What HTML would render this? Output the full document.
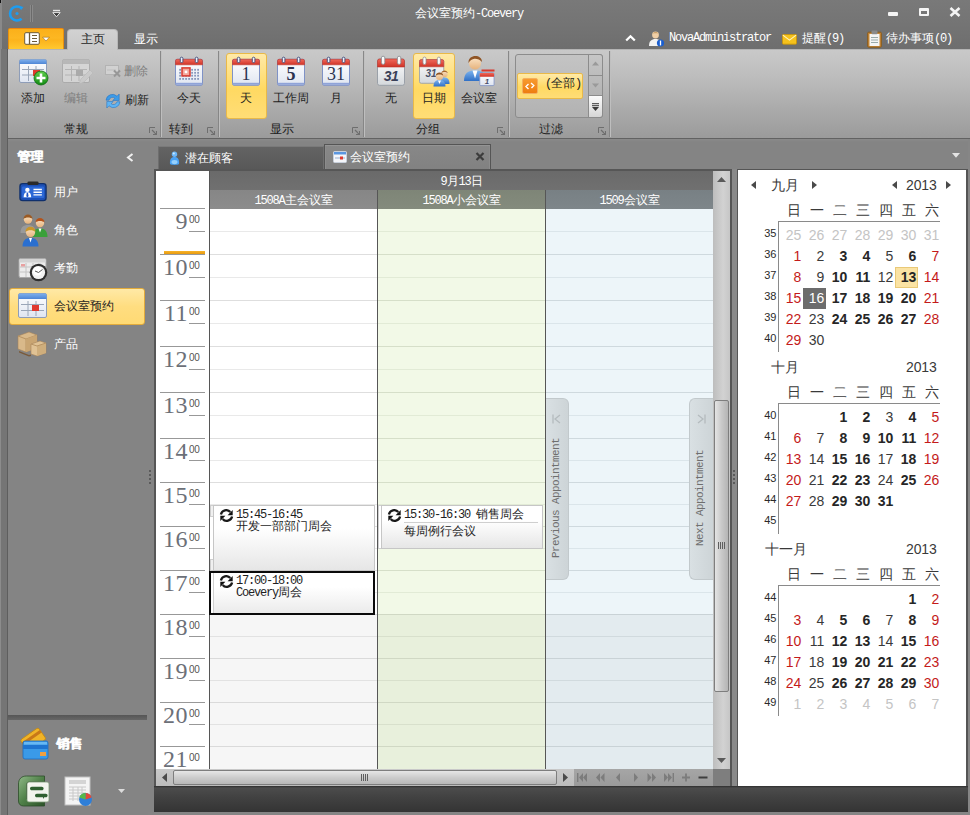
<!DOCTYPE html>
<html lang="zh">
<head>
<meta charset="utf-8">
<title>会议室预约-Coevery</title>
<style>
*{box-sizing:border-box;margin:0;padding:0}
html,body{width:970px;height:815px;overflow:hidden}
body{position:relative;background:#848484;font-family:"Liberation Sans",sans-serif;font-size:12px;color:#1e1e1e}
.a{position:absolute}
.t{position:absolute;white-space:nowrap;line-height:14px;height:14px;font-size:12px}
.m{font-family:"Liberation Mono",monospace;font-size:12px;letter-spacing:-1.2px}
.w{color:#fff}
.c{text-align:center}
/* title */
#title{left:0;top:0;width:970px;height:49px;background:linear-gradient(#797979,#747474 50%,#6e6e6e)}
#edgeL{left:0;top:49px;width:8px;height:766px;background:linear-gradient(90deg,#8c8c8c 0 1px,#757575 1px 7px,#5e5e5e 7px 8px)}
/* ribbon */
#ribbon{left:8px;top:49px;width:962px;height:89px;background:linear-gradient(#c9c9c9,#bdbdbd 30%,#a9a9a9 70%,#9b9b9b);border-top:1px solid #b4b4b4}
#ribline{left:8px;top:138px;width:962px;height:1px;background:#626262}
#ribshadow{left:8px;top:139px;width:962px;height:3px;background:linear-gradient(#8a8a8a,#848484)}
.sep{position:absolute;top:51px;width:2px;height:86px;border-left:1px solid #858585;border-right:1px solid #c0c0c0;opacity:.95}
.lbl{top:122px}
.hot{position:absolute;background:linear-gradient(#ffeaa8,#ffd962 55%,#ffdd76);border:1px solid #e9b948;border-radius:3px}
.launch{position:absolute;width:8px;height:8px;top:127px}
</style>
</head>
<body>
<div id="title" class="a"></div>
<div id="edgeL" class="a"></div>
<div id="ribbon" class="a"></div>
<div id="ribline" class="a"></div>
<div id="ribshadow" class="a"></div>
<!-- logo -->
<svg class="a" style="left:8px;top:4px" width="17" height="19" viewBox="0 0 17 19"><path d="M13.6 4.2 A7 7 0 1 0 13.6 14.8" fill="none" stroke="#1d9cf0" stroke-width="2.6"/><circle cx="9" cy="9.5" r="1.6" fill="#1d9cf0"/><path d="M11.5 2.2 L15.5 3 L13 6.2z" fill="#1d9cf0"/></svg>
<div class="a" style="left:30px;top:5px;width:3px;height:17px;background:linear-gradient(90deg,#8a8a8a 0 1px,#6a6a6a 1px 2px,#8a8a8a 2px 3px)"></div>
<div class="a" style="left:0;top:0;width:2px;height:49px;background:#898989"></div><div class="a" style="left:0;top:0;width:1px;height:3px;background:#111"></div>
<svg class="a" style="left:52px;top:9px" width="9" height="9" viewBox="0 0 9 9"><path d="M1 1.5h7" stroke="#e6e6e6" stroke-width="1.4"/><path d="M0.8 3.6h7.4L4.5 7.8z" fill="#3a3a3a" stroke="#e6e6e6" stroke-width="1"/></svg>
<div class="t w" style="left:415px;top:6px"><span>会议室预约</span><span class="m">-Coevery</span></div>
<!-- window buttons -->
<div class="a" style="left:888px;top:12px;width:10px;height:4px;background:#f4f4f4;border-radius:1px"></div>
<div class="a" style="left:919px;top:8px;width:10px;height:8px;border:2px solid #f4f4f4;border-top-width:3px;border-radius:1px"></div>
<svg class="a" style="left:949px;top:7px" width="12" height="10" viewBox="0 0 12 10"><path d="M1.5 1l9 8M10.5 1l-9 8" stroke="#f4f4f4" stroke-width="2.6"/></svg>
<!-- app button -->
<div class="a" style="left:8px;top:28px;width:56px;height:21px;border-radius:2px 2px 0 0;background:linear-gradient(#fbb01a,#fdb722 45%,#fcb31c 55%,#ffc830);border:1px solid #e8900e;border-top-color:#f0860c;border-bottom:none"></div>
<svg class="a" style="left:24px;top:32px" width="26" height="13" viewBox="0 0 26 13"><rect x="0.7" y="0.7" width="14.6" height="11.6" rx="1.2" fill="#fff" stroke="#6b5a3a" stroke-width="1"/><path d="M5.5 1v11" stroke="#6b5a3a" stroke-width="1.3"/><path d="M8 3.5h5M8 6.5h5M8 9.5h5" stroke="#6b5a3a" stroke-width="1.2"/><path d="M18.6 5.2h6.8L22 9z" fill="#fff" stroke="#8a5a10" stroke-width=".5"/></svg>
<!-- tabs -->
<div class="a" style="left:67px;top:29px;width:51px;height:21px;border-radius:4px 4px 0 0;background:linear-gradient(#d2d2d2,#c8c8c8);border:1px solid #b8b8b8;border-bottom:none"></div>
<div class="t c" style="left:67px;top:32px;width:51px;font-size:12px">主页</div>
<div class="t w c" style="left:120px;top:32px;width:51px;font-size:12px">显示</div>
<!-- right status items -->
<svg class="a" style="left:625px;top:34px" width="11" height="8" viewBox="0 0 11 8"><path d="M1.2 6.6L5.5 2.2L9.8 6.6" fill="none" stroke="#fff" stroke-width="2.2"/></svg>
<svg class="a" style="left:648px;top:30px" width="18" height="18" viewBox="0 0 18 18"><circle cx="7.5" cy="5" r="3.4" fill="#f0cfa6"/><path d="M4.6 3.6c1-2.2 5-2.2 5.8 0c-1.6-.6-4-.6-5.8 0z" fill="#c9a06a"/><path d="M1 16c0-5 2.5-7 6.5-7s6.5 2 6.500 7z" fill="#f2f2f2"/><circle cx="12.500" cy="13" r="3.600" fill="#1a5fd0"/><path d="M12.5 10.600v4.800" stroke="#fff" stroke-width="1.3"/></svg>
<div class="t w m" style="left:669px;top:31px">NovaAdministrator</div>
<svg class="a" style="left:782px;top:34px" width="15" height="10.600" viewBox="0 0 17 13" preserveAspectRatio="none"><rect x=".5" y=".5" width="16" height="12" rx="1" fill="#f6c21c" stroke="#c9930a"/><path d="M1 1.500l7.500 6l7.500-6" fill="none" stroke="#fff3c0" stroke-width="1.2"/></svg>
<div class="t w" style="left:802px;top:31px;font-size:12px">提醒<span class="m">(9)</span></div>
<svg class="a" style="left:867px;top:30px" width="15" height="18" viewBox="0 0 15 18"><rect x=".7" y="2.200" width="13.600" height="15" rx="1" fill="#c98a3a" stroke="#8a5a1a"/><rect x="2.500" y="4" width="10" height="12" fill="#f4f4f4"/><rect x="4.500" y=".6" width="6" height="3.600" rx="1" fill="#8a8a8a"/><path d="M4 7.500h7M4 10h7M4 12.500h7" stroke="#9aa" stroke-width="1"/></svg>
<div class="t w" style="left:886px;top:31px;font-size:12px">待办事项<span class="m">(0)</span></div>

<!-- RIBBON -->
<svg width="0" height="0" style="position:absolute">
<defs>
<linearGradient id="gRed" x1="0" y1="0" x2="0" y2="1"><stop offset="0" stop-color="#f0685a"/><stop offset="1" stop-color="#cf3327"/></linearGradient>
<linearGradient id="gPaper" x1="0" y1="0" x2="0" y2="1"><stop offset="0" stop-color="#ffffff"/><stop offset="1" stop-color="#dfe5f1"/></linearGradient>
<linearGradient id="gPaperG" x1="0" y1="0" x2="0" y2="1"><stop offset="0" stop-color="#ffffff"/><stop offset="1" stop-color="#d4d8dc"/></linearGradient>
<linearGradient id="gBlueTop" x1="0" y1="0" x2="0" y2="1"><stop offset="0" stop-color="#7fb0ec"/><stop offset="1" stop-color="#4e86d6"/></linearGradient>
<linearGradient id="gGreen" x1="0" y1="0" x2="0" y2="1"><stop offset="0" stop-color="#5fd04a"/><stop offset="1" stop-color="#128a14"/></linearGradient>
<linearGradient id="gSkin" x1="0" y1="0" x2="0" y2="1"><stop offset="0" stop-color="#fbe3c4"/><stop offset="1" stop-color="#e5b27c"/></linearGradient>
<linearGradient id="gShirt" x1="0" y1="0" x2="0" y2="1"><stop offset="0" stop-color="#7db4ee"/><stop offset="1" stop-color="#2f6fc6"/></linearGradient>
<g id="calbase">
  <rect x="0.5" y="3.300" width="27" height="26" rx="1.500" fill="url(#gPaper)" stroke="#7f92c6"/>
  <path d="M0.5 8.800V4.800a1.500 1.500 0 0 1 1.500-1.500h24a1.500 1.500 0 0 1 1.500 1.500v4z" fill="url(#gRed)" stroke="#c0392e" stroke-width=".6"/>
  <rect x="1" y="26.800" width="26" height="2" fill="#8fa3d8"/>
  <rect x="5.300" y="1.200" width="2.600" height="5.400" rx="1.200" fill="#eef1f8" stroke="#3c4a78" stroke-width=".9"/>
  <rect x="20.300" y="1.200" width="2.600" height="5.400" rx="1.200" fill="#eef1f8" stroke="#3c4a78" stroke-width=".9"/>
</g>
<g id="calgray">
  <rect x="0.5" y="4" width="27" height="26.300" rx="2" fill="url(#gPaperG)" stroke="#9aa0a8"/>
  <path d="M0.5 12V6a2 2 0 0 1 2-2h23a2 2 0 0 1 2 2v6z" fill="url(#gRed)" stroke="#b8342a" stroke-width=".6"/>
  <rect x="4.400" y="1.200" width="3.400" height="8.200" rx="1.700" fill="#fafafa" stroke="#85888e" stroke-width=".8"/>
  <rect x="20.400" y="1.200" width="3.400" height="8.200" rx="1.700" fill="#fafafa" stroke="#85888e" stroke-width=".8"/>
</g>
<g id="launch"><path d="M0.5 6V0.5h5.500" fill="none" stroke="#6e6e6e" stroke-width="1"/><path d="M3 3l4 4M7.500 4v3.500h-3.500" fill="none" stroke="#6e6e6e" stroke-width="1.200"/></g>
<g id="recur"><path d="M1.900 5.400A5.400 5.400 0 0 1 11.300 3.100" fill="none" stroke="#1a1a1a" stroke-width="2.300"/><path d="M13.700 1v5.200H8.600z" fill="#111"/><path d="M13.100 7.600A5.400 5.400 0 0 1 3.700 9.900" fill="none" stroke="#1a1a1a" stroke-width="2.300"/><path d="M1.300 12V6.800H6.400z" fill="#111"/></g>
</defs>
</svg>
<!-- separators -->
<div class="sep" style="left:160px"></div>
<div class="sep" style="left:218px"></div>
<div class="sep" style="left:363px"></div>
<div class="sep" style="left:508px"></div>
<div class="sep" style="left:609px"></div>
<!-- group 1 -->
<svg class="a" style="left:19px;top:58px" width="30" height="28" viewBox="0 0 30 28">
 <rect x=".5" y="1.500" width="27" height="23" rx="1.500" fill="url(#gPaper)" stroke="#8e9db8"/>
 <path d="M.5 6V3a1.500 1.500 0 0 1 1.500-1.500h24a1.500 1.500 0 0 1 1.500 1.500v3z" fill="url(#gBlueTop)"/>
 <path d="M3 11.500h22M3 17h22M9.500 8v15M17 8v15" stroke="#9aa6b8" stroke-width="1"/>
 <rect x="14" y="12" width="7" height="6" fill="#e03a30"/>
 <circle cx="22" cy="20" r="7" fill="url(#gGreen)" stroke="#0c6a10" stroke-width=".8"/>
 <path d="M22 15.500v9M17.500 20h9" stroke="#fff" stroke-width="2.600"/>
</svg>
<div class="t c" style="left:13px;top:91px;width:40px">添加</div>
<svg class="a" style="left:62px;top:58px;opacity:.75" width="31" height="28" viewBox="0 0 31 28">
 <rect x=".5" y="1.500" width="27" height="23" rx="1.500" fill="#dcdcdc" stroke="#a6a6a6"/>
 <path d="M.5 6V3a1.500 1.500 0 0 1 1.500-1.500h24a1.500 1.500 0 0 1 1.500 1.500v3z" fill="#b4b4b4"/>
 <path d="M3 11.500h22M3 17h22M9.500 8v15M17 8v15" stroke="#b0b0b0" stroke-width="1"/>
 <rect x="14" y="12" width="7" height="6" fill="#a4a4a4"/>
 <path d="M17 26l2-5l9-9l3 3l-9 9z" fill="#cfcfcf" stroke="#b5b5b5" stroke-width=".6"/>
</svg>
<div class="t c" style="left:56px;top:91px;width:40px;color:#7e7e7e">编辑</div>
<svg class="a" style="left:105px;top:65px;opacity:.8" width="17" height="13" viewBox="0 0 17 13">
 <rect x=".5" y=".5" width="13" height="9" fill="#d6d6d6" stroke="#b0b0b0"/><path d="M2 5h9" stroke="#bcbcbc"/>
 <path d="M9 5.500l6 6M15 5.500l-6 6" stroke="#8e8e8e" stroke-width="2"/>
</svg>
<div class="t" style="left:124px;top:64px;color:#7e7e7e">删除</div>
<svg class="a" style="left:104px;top:92px" width="18" height="18" viewBox="0 0 18 18">
 <path d="M2 8.200A6.500 6.500 0 0 1 13 4.200L15.200 2V8.500H8.700L10.900 6.300A3.600 3.600 0 0 0 5 8.200z" fill="#3c9be8" stroke="#1c6cc0" stroke-width=".5"/>
 <path d="M16 9.800A6.500 6.500 0 0 1 5 13.800L2.800 16V9.500H9.300L7.100 11.700A3.600 3.600 0 0 0 13 9.800z" fill="#5fb4f4" stroke="#1c6cc0" stroke-width=".5"/>
</svg>
<div class="t" style="left:125px;top:93px">刷新</div>
<div class="t c lbl" style="left:56px;width:40px">常规</div>
<svg class="launch" style="left:149px"><use href="#launch"/></svg>
<!-- group 2 -->
<svg class="a" style="left:175px;top:56px" width="28" height="30" viewBox="0 0 28 30"><use href="#calbase"/>
 <g fill="#8798bc"><rect x="4.2" y="12.9" width="1.800" height="1.800"/><rect x="7.2" y="12.9" width="1.800" height="1.800"/><rect x="10.2" y="12.9" width="1.800" height="1.800"/><rect x="13.2" y="12.9" width="1.800" height="1.800"/><rect x="16.2" y="12.9" width="1.800" height="1.800"/><rect x="19.2" y="12.9" width="1.800" height="1.800"/><rect x="22.2" y="12.9" width="1.800" height="1.800"/><rect x="4.2" y="15.9" width="1.800" height="1.800"/><rect x="7.2" y="15.9" width="1.800" height="1.800"/><rect x="10.2" y="15.9" width="1.800" height="1.800"/><rect x="13.2" y="15.9" width="1.800" height="1.800"/><rect x="16.2" y="15.9" width="1.800" height="1.800"/><rect x="19.2" y="15.9" width="1.800" height="1.800"/><rect x="22.2" y="15.9" width="1.800" height="1.800"/><rect x="4.2" y="18.8" width="1.800" height="1.800"/><rect x="7.2" y="18.8" width="1.800" height="1.800"/><rect x="10.2" y="18.8" width="1.800" height="1.800"/><rect x="13.2" y="18.8" width="1.800" height="1.800"/><rect x="16.2" y="18.8" width="1.800" height="1.800"/><rect x="19.2" y="18.8" width="1.800" height="1.800"/><rect x="22.2" y="18.8" width="1.800" height="1.800"/><rect x="4.2" y="22.0" width="1.800" height="1.800"/><rect x="7.2" y="22.0" width="1.800" height="1.800"/><rect x="10.2" y="22.0" width="1.800" height="1.800"/><rect x="13.2" y="22.0" width="1.800" height="1.800"/><rect x="16.2" y="22.0" width="1.800" height="1.800"/><rect x="19.2" y="22.0" width="1.800" height="1.800"/><rect x="22.2" y="22.0" width="1.800" height="1.800"/></g>
 <rect x="7" y="11.900" width="8" height="8" fill="#f4a79c" stroke="#d8392e" stroke-width="1.500"/><rect x="9.700" y="14.600" width="2.600" height="2.600" fill="#fff"/>
</svg>
<div class="t c" style="left:169px;top:91px;width:40px">今天</div>
<div class="t c lbl" style="left:161px;width:40px">转到</div>
<svg class="launch" style="left:207px"><use href="#launch"/></svg>
<!-- group 3 -->
<div class="hot" style="left:226px;top:53px;width:41px;height:66px"></div>
<svg class="a" style="left:232px;top:56px" width="28" height="30" viewBox="0 0 28 30"><use href="#calbase"/><text x="14" y="23.600" text-anchor="middle" font-family="Liberation Serif" font-size="18" fill="#2c3350">1</text></svg>
<div class="t c" style="left:226px;top:91px;width:40px">天</div>
<svg class="a" style="left:277px;top:56px" width="28" height="30" viewBox="0 0 28 30"><use href="#calbase"/><text x="14" y="23.600" text-anchor="middle" font-family="Liberation Serif" font-size="18" font-weight="bold" fill="#2c3350">5</text></svg>
<div class="t c" style="left:271px;top:91px;width:40px">工作周</div>
<svg class="a" style="left:322px;top:56px" width="28" height="30" viewBox="0 0 28 30"><use href="#calbase"/><text x="14" y="23.600" text-anchor="middle" font-family="Liberation Serif" font-size="18" fill="#2c3350">31</text></svg>
<div class="t c" style="left:316px;top:91px;width:40px">月</div>
<div class="t c lbl" style="left:262px;width:40px">显示</div>
<svg class="launch" style="left:352px"><use href="#launch"/></svg>
<!-- group 4 -->
<svg class="a" style="left:377px;top:55px" width="28" height="31" viewBox="0 0 28 31"><use href="#calgray"/><text x="14" y="26" text-anchor="middle" font-family="Liberation Sans" font-size="14" font-weight="bold" font-style="italic" fill="#3a4058" letter-spacing="-.5">31</text></svg>
<div class="t c" style="left:371px;top:91px;width:40px">无</div>
<div class="hot" style="left:413px;top:53px;width:42px;height:66px"></div>
<svg class="a" style="left:419px;top:56px" width="31" height="31" viewBox="0 0 31 31">
 <g transform="scale(.9)"><use href="#calgray"/></g><text x="12" y="21" text-anchor="middle" font-family="Liberation Sans" font-size="10" font-weight="bold" font-style="italic" fill="#4a5068">31</text>
 <circle cx="25.500" cy="18" r="3.200" fill="url(#gSkin)"/><path d="M22.300 17c.2-3.500 6.200-3.500 6.400 0c-1.500-1.500-4.800-1.500-6.400 0z" fill="#a86a30"/><path d="M20.500 28c0-5 2-6.500 5-6.500s5 1.500 5 6.500z" fill="url(#gShirt)"/>
 <circle cx="20.500" cy="20.500" r="3.600" fill="url(#gSkin)"/><path d="M16.800 19.800c.2-4.400 7.200-4.400 7.400 0c-1.600-1.800-5.600-1.800-7.400 0z" fill="#8f5424"/><path d="M14.500 30.500c0-5 2.500-6.500 6-6.500s6 1.500 6 6.500z" fill="url(#gShirt)"/><path d="M19 24.500h3l-1.500 3.500z" fill="#fff"/>
</svg>
<div class="t c" style="left:414px;top:91px;width:40px">日期</div>
<svg class="a" style="left:463px;top:55px" width="32" height="32" viewBox="0 0 32 32">
 <circle cx="12" cy="8.500" r="6" fill="url(#gSkin)"/><path d="M5.500 8c-.5-9 13.500-9 13.500-1c-2-2.500-5-3.500-7.500-3.300c-2.500.3-4.500 1.800-6 4.300z" fill="#8f5424"/>
 <path d="M1 26c0-8 4-10.500 11-10.500s11 2.500 11 10.500z" fill="url(#gShirt)"/><path d="M9.500 15.500h5l-2.500 8z" fill="#fff"/>
 <g transform="translate(16.500,15.500) scale(.53)"><rect x="0.5" y="4.500" width="27" height="24" rx="2" fill="url(#gPaper)" stroke="#7f92c6" stroke-width="1.500"/><path d="M0.5 12V6.500a2 2 0 0 1 2-2h23a2 2 0 0 1 2 2v5.500z" fill="url(#gRed)"/></g>
 <rect x="18.500" y="14.500" width="13" height="2" fill="#d8392e"/>
 <text x="24" y="29" text-anchor="middle" font-family="Liberation Sans" font-size="8" font-weight="bold" font-style="italic" fill="#4a5068">1</text>
</svg>
<div class="t c" style="left:458px;top:91px;width:41px">会议室</div>
<div class="t c lbl" style="left:408px;width:40px">分组</div>
<svg class="launch" style="left:497px"><use href="#launch"/></svg>
<!-- group 5 -->
<div class="a" style="left:515px;top:54px;width:88px;height:64px;border:1px solid #8c8c8c;border-radius:3px;background:linear-gradient(#c4c4c4,#b2b2b2)"></div>
<div class="a" style="left:588px;top:54px;width:15px;height:22px;border:1px solid #8c8c8c;border-radius:0 3px 0 0;background:linear-gradient(#c6c6c6,#bcbcbc)"></div>
<div class="a" style="left:588px;top:75px;width:15px;height:21px;border:1px solid #8c8c8c;background:linear-gradient(#bcbcbc,#b4b4b4)"></div>
<div class="a" style="left:588px;top:95px;width:15px;height:23px;border:1px solid #8c8c8c;border-radius:0 0 3px 0;background:linear-gradient(#fbfbfb,#d6d6d6)"></div>
<svg class="a" style="left:592px;top:61px" width="7" height="5" viewBox="0 0 7 5"><path d="M0 4.500L3.500 0.500L7 4.500z" fill="#9a9a9a"/></svg>
<svg class="a" style="left:592px;top:83px" width="7" height="5" viewBox="0 0 7 5"><path d="M0 .5L3.500 4.500L7 .5z" fill="#9a9a9a"/></svg>
<svg class="a" style="left:592px;top:103px" width="7" height="8" viewBox="0 0 7 8"><path d="M0 .7h7M0 2.700h7" stroke="#3a3a3a" stroke-width="1"/><path d="M0 4L3.500 8L7 4z" fill="#3a3a3a"/></svg>
<div class="hot" style="left:517px;top:73px;width:66px;height:26px;border-radius:2px"></div>
<div class="a" style="left:522px;top:78px;width:16px;height:16px;border-radius:2px;background:linear-gradient(#f79a2e,#ee7d10);border:1px solid #f3b060"></div>
<svg class="a" style="left:525px;top:81px" width="10" height="10" viewBox="0 0 10 10"><path d="M3.500 3L1 5.500L3.500 8M6 2L8.800 4.600L6.500 7" fill="none" stroke="#fff" stroke-width="1.400"/></svg>
<div class="t" style="left:545px;top:76px"><span class="m">(</span>全部<span class="m">)</span></div>
<div class="t c lbl" style="left:531px;width:40px">过滤</div>
<svg class="launch" style="left:598px"><use href="#launch"/></svg>
<!-- NAV -->
<div class="t w" style="left:17px;top:150px;font-size:13px;font-weight:bold;text-shadow:.5px 0 0 #fff">管理</div>
<svg class="a" style="left:126px;top:153px" width="8" height="9" viewBox="0 0 8 9"><path d="M6.500 1L2 4.500L6.500 8" fill="none" stroke="#f0f0f0" stroke-width="2"/></svg>
<!-- user icon -->
<svg class="a" style="left:19px;top:181px" width="28" height="21.500" viewBox="0 0 30 24" preserveAspectRatio="none">
 <rect x="1" y="3" width="28" height="19" rx="3" fill="#1b4fb6" stroke="#10306c" stroke-width="1.400"/>
 <rect x="9" y=".5" width="12" height="4" rx="1.500" fill="#2a2a2a"/>
 <rect x="3" y="6" width="24" height="13" rx="1.500" fill="#2c68d6"/>
 <circle cx="9" cy="10" r="2.400" fill="#fff"/><path d="M5 18c0-4 1.500-5.500 4-5.500s4 1.500 4 5.500z" fill="#fff"/><path d="M8.300 13h1.400l.5 4l-1.200 1l-1.200-1z" fill="#1f55c4"/>
 <path d="M15.500 9.500h9M15.500 12.500h9M15.500 15.500h9" stroke="#fff" stroke-width="1.600"/>
</svg>
<div class="t w" style="left:54px;top:185px">用户</div>
<!-- roles icon -->
<svg class="a" style="left:19px;top:214px" width="30" height="33" viewBox="0 0 30 33">
 <circle cx="9" cy="5.500" r="4.200" fill="url(#gSkin)"/><path d="M4.500 5c0-6 9-6 9 0c-2-2-7-2-9 0z" fill="#9a5a24"/><path d="M1.500 19c0-6 3-8 7.500-8s7.500 2 7.500 8z" fill="#9a9a9a"/>
 <circle cx="21" cy="9" r="4.200" fill="url(#gSkin)"/><path d="M16.500 8.500c0-6 9-6 9 0c-2-2-7-2-9 0z" fill="#b4531a"/><path d="M13.500 23c0-6 3-8.500 7.500-8.500s7.500 2.500 7.500 8.500z" fill="#3aa03a"/><path d="M19.500 14.500h3l-1.500 4z" fill="#fff"/>
 <circle cx="11.500" cy="18.500" r="4.600" fill="url(#gSkin)"/><path d="M6.500 18c0-7 10-7 10 0c-2-2.500-8-2.500-10 0z" fill="#c9962a"/><path d="M3.500 32.500c0-6 3-8.500 8-8.500s8 2.500 8 8.500z" fill="#2a6fd0"/><path d="M10 24h3l-1.500 4.500z" fill="#fff"/>
</svg>
<div class="t w" style="left:54px;top:223px">角色</div>
<!-- attendance icon -->
<svg class="a" style="left:18px;top:257px" width="30" height="25" viewBox="0 0 30 25">
 <rect x="1" y="1.500" width="27" height="19" rx="1.500" fill="#ececec" stroke="#a8a8a8"/><rect x="1.500" y="2" width="26" height="3.500" fill="#d4d4d4"/>
 <path d="M2 10h25M2 15h25M8 6v14M15 6v14M22 6v14" stroke="#c4c4c4"/><rect x="3" y="7" width="4" height="2.500" fill="#e8a0a0"/>
 <circle cx="20.500" cy="15.500" r="8.800" fill="#2e2e2e"/><circle cx="20.500" cy="15.500" r="6.600" fill="#f2f2f2"/><circle cx="19.500" cy="14" r="4.500" fill="#fff"/><path d="M20.500 15.500L24.500 12.500M20.500 15.500L17 14" stroke="#555" stroke-width="1"/>
</svg>
<div class="t w" style="left:54px;top:261px">考勤</div>
<!-- selected -->
<div class="a" style="left:9px;top:288px;width:136px;height:37px;border-radius:3px;border:1px solid #e2ab3c;background:linear-gradient(#ffe9a6,#ffdd80 50%,#ffda74)"></div>
<svg class="a" style="left:18px;top:293px" width="30" height="26" viewBox="0 0 30 26">
 <rect x=".5" y=".5" width="28" height="24" rx="1.500" fill="url(#gPaper)" stroke="#8e9db8"/>
 <path d="M.5 6V2a1.500 1.500 0 0 1 1.500-1.500h25a1.500 1.500 0 0 1 1.500 1.500v4z" fill="url(#gBlueTop)"/>
 <path d="M3 11.500h23M3 17.500h23M10 8v15M18 8v15" stroke="#9aa6b8" stroke-width="1"/>
 <rect x="14" y="12" width="7" height="6" fill="#e03a30"/>
</svg>
<div class="t" style="left:54px;top:299px">会议室预约</div>
<!-- product icon -->
<svg class="a" style="left:17px;top:330px" width="31" height="27" viewBox="0 0 31 27">
 <path d="M1 6l11-4l8 3v13l-11 4l-8-3z" fill="#d9b98a" stroke="#a8855a" stroke-width=".6"/><path d="M1 6l8 3l11-4" fill="none" stroke="#b89464"/><path d="M9 9v13" stroke="#b89464"/><path d="M9 9l11-4v13l-11 4z" fill="#c9a572"/>
 <path d="M14 14l9-3l6 2v10l-9 3l-6-2z" fill="#e0c294" stroke="#a8855a" stroke-width=".6"/><path d="M20 16l9-3v10l-9 3z" fill="#cfae7c"/><path d="M14 14l6 2l9-3" fill="none" stroke="#b89464"/>
 <path d="M2 21l10 4l2-.5v1.500l-2 .5l-10-4z" fill="#7a5a3a"/>
</svg>
<div class="t w" style="left:54px;top:337px">产品</div>
<!-- nav bottom -->
<div class="a" style="left:8px;top:715px;width:139px;height:5px;background:linear-gradient(#565656,#666)"></div>
<svg class="a" style="left:19px;top:727px" width="31" height="33" viewBox="0 0 31 33">
 <g transform="rotate(-35 15 12)"><rect x="3" y="5" width="22" height="14" rx="2" fill="#f0b428" stroke="#c88a10" stroke-width=".8"/><rect x="3" y="8" width="22" height="3" fill="#c87818"/></g>
 <rect x="4" y="14" width="25" height="18" rx="2" fill="#3a9ae8" stroke="#1c6cc0" stroke-width=".8"/><rect x="4" y="18" width="25" height="4" fill="#1e74d0"/><rect x="21" y="25" width="6" height="4" fill="#f0a040"/><path d="M5 15l23 0l0 2.500l-23 0z" fill="#7cc4f8" opacity=".7"/>
</svg>
<div class="t w" style="left:56px;top:737px;font-size:13px;font-weight:bold;text-shadow:.5px 0 0 #fff">销售</div>
<svg class="a" style="left:17px;top:775px" width="34" height="33" viewBox="0 0 34 33">
 <defs><linearGradient id="gFold" x1="0" y1="0" x2="1" y2="1"><stop offset="0" stop-color="#8fb887"/><stop offset=".5" stop-color="#4f8048"/><stop offset="1" stop-color="#2c5228"/></linearGradient></defs>
 <path d="M1.500 9c0-5 3-8 8-8h18v6h-15c-2 0-3 1-3 3v14h18v7h-21c-3 0-5-2-5-5z" fill="url(#gFold)" stroke="#2c4c28" stroke-width=".8"/>
 <path d="M10 9.500c0-1.500 1-2.500 2.500-2.500h17.500c1 0 2 1 2 2v16c0 1-1 2-2 2h-18c-1 0-2-1-2-2z" fill="#f3f5ee" stroke="#7c9a76" stroke-width=".8"/>
 <path d="M13 13.500c0-1 .8-1.800 1.800-1.800h10c1 0 1.800.8 1.800 1.800s-.8 1.800-1.800 1.800h-10c-1 0-1.800-.8-1.800-1.800zM18 20.500c0-1 .8-1.800 1.800-1.800h9c1 0 1.800.8 1.800 1.800s-.8 1.800-1.800 1.800h-1.500l-1.300 1.700v-1.700h-6.200c-1 0-1.800-.8-1.800-1.800z" fill="#2f6030"/>
</svg>
<svg class="a" style="left:64px;top:776px" width="30" height="31" viewBox="0 0 30 31">
 <rect x="1" y="1" width="25" height="28" fill="#f4f4f4" stroke="#c0c0c0"/><rect x="5" y="4" width="17" height="4" fill="#d4d4d4"/>
 <path d="M5 11h17M5 14h17M5 17h17M5 20h17M5 23h17M9 11v14M14 11v14M18 11v14" stroke="#c8c8c8"/>
 <circle cx="21.500" cy="23.500" r="6.500" fill="#2f7fd8"/><path d="M21.500 23.500V17a6.500 6.500 0 0 1 6.200 4.500z" fill="#e04a3a"/><path d="M21.500 23.500L15.300 21.500A6.500 6.500 0 0 1 21.500 17z" fill="#58b848"/>
</svg>
<svg class="a" style="left:118px;top:789px" width="7" height="4" viewBox="0 0 7 4"><path d="M0 0h7L3.500 4z" fill="#dcdcdc"/></svg>
<!-- splitter dots -->
<div class="a" style="left:149px;top:470px;width:2px;height:16px;background:repeating-linear-gradient(#5a5a5a 0 2px,transparent 2px 4px)"></div>
<!-- DOC TABS -->
<div class="a" style="left:158px;top:146px;width:166px;height:24px;background:linear-gradient(#636363,#585858);border:1px solid #6e6e6e;border-bottom:none;border-top-color:#7a7a7a"></div>
<svg class="a" style="left:169px;top:151px" width="11" height="14" viewBox="0 0 11 14"><circle cx="5.500" cy="3.200" r="2.700" fill="#6cb6f8"/><path d="M1 13c-.5-5 1.500-7 4.500-7s5 2 4.500 7c-2 1.200-7 1.200-9 0z" fill="#4aa2f4"/><ellipse cx="5.500" cy="11" rx="3" ry="2" fill="#a8dcff" opacity=".8"/><circle cx="4.800" cy="2.500" r="1" fill="#d0ecff"/></svg>
<div class="t w" style="left:185px;top:151px">潜在顾客</div>
<div class="a" style="left:324px;top:144px;width:167px;height:26px;background:linear-gradient(#888,#818181);border:1px solid #555;border-bottom:none;box-shadow:inset 0 1px 0 #949494,inset 1px 0 0 #8c8c8c,inset -1px 0 0 #8c8c8c"></div>
<svg class="a" style="left:333px;top:151px" width="14" height="12" viewBox="0 0 14 12"><rect x=".5" y=".5" width="13" height="11" rx="1" fill="#f4f6fa" stroke="#c8d0dc"/><rect x="1" y="1" width="12" height="2.500" fill="#5a96e0"/><path d="M2 7h10" stroke="#9ab0d0"/><rect x="7" y="5.500" width="3" height="3" fill="#e03a30"/></svg>
<div class="t w" style="left:350px;top:150px">会议室预约</div>
<svg class="a" style="left:475px;top:152px" width="10" height="9" viewBox="0 0 10 9"><path d="M1.500 1l7 7M8.500 1l-7 7" stroke="#3c3c3c" stroke-width="2.200"/></svg>
<svg class="a" style="left:952px;top:153px" width="8" height="5" viewBox="0 0 8 5"><path d="M0 0h8L4 4.800z" fill="#e4e4e4"/></svg>
<!-- SCHEDULER -->
<div class="a" style="left:154px;top:169px;width:578px;height:618px;background:#565656"></div>
<div class="a" style="left:156px;top:171px;width:53px;height:598px;background:#fff"></div>
<div class="a" style="left:210px;top:171px;width:503px;height:19px;background:linear-gradient(#6a6a6a,#707070)"></div>
<div class="t w c" style="left:210px;top:174px;width:503px"><span class="m">9</span>月<span class="m">13</span>日</div>
<div class="a" style="left:210px;top:190px;width:167px;height:19px;background:linear-gradient(#868686,#8c8c8c)"></div>
<div class="t w c" style="left:210px;top:193px;width:167px"><span class="m">1508A</span>主会议室</div>
<div class="a" style="left:210px;top:209px;width:167px;height:405px;background:#ffffff"></div>
<div class="a" style="left:210px;top:614px;width:167px;height:155px;background:#f6f6f6"></div>
<div class="a" style="left:210px;top:231px;width:167px;height:1px;background:#e9e9e9"></div>
<div class="a" style="left:210px;top:254px;width:167px;height:1px;background:#dedede"></div>
<div class="a" style="left:210px;top:277px;width:167px;height:1px;background:#e9e9e9"></div>
<div class="a" style="left:210px;top:300px;width:167px;height:1px;background:#dedede"></div>
<div class="a" style="left:210px;top:323px;width:167px;height:1px;background:#e9e9e9"></div>
<div class="a" style="left:210px;top:346px;width:167px;height:1px;background:#dedede"></div>
<div class="a" style="left:210px;top:369px;width:167px;height:1px;background:#e9e9e9"></div>
<div class="a" style="left:210px;top:392px;width:167px;height:1px;background:#dedede"></div>
<div class="a" style="left:210px;top:415px;width:167px;height:1px;background:#e9e9e9"></div>
<div class="a" style="left:210px;top:438px;width:167px;height:1px;background:#dedede"></div>
<div class="a" style="left:210px;top:460px;width:167px;height:1px;background:#e9e9e9"></div>
<div class="a" style="left:210px;top:482px;width:167px;height:1px;background:#dedede"></div>
<div class="a" style="left:210px;top:504px;width:167px;height:1px;background:#e9e9e9"></div>
<div class="a" style="left:210px;top:526px;width:167px;height:1px;background:#dedede"></div>
<div class="a" style="left:210px;top:548px;width:167px;height:1px;background:#e9e9e9"></div>
<div class="a" style="left:210px;top:570px;width:167px;height:1px;background:#dedede"></div>
<div class="a" style="left:210px;top:592px;width:167px;height:1px;background:#e9e9e9"></div>
<div class="a" style="left:210px;top:614px;width:167px;height:1px;background:#dadada"></div>
<div class="a" style="left:210px;top:636px;width:167px;height:1px;background:#e2e2e2"></div>
<div class="a" style="left:210px;top:658px;width:167px;height:1px;background:#dadada"></div>
<div class="a" style="left:210px;top:680px;width:167px;height:1px;background:#e2e2e2"></div>
<div class="a" style="left:210px;top:702px;width:167px;height:1px;background:#dadada"></div>
<div class="a" style="left:210px;top:724px;width:167px;height:1px;background:#e2e2e2"></div>
<div class="a" style="left:210px;top:746px;width:167px;height:1px;background:#dadada"></div>
<div class="a" style="left:378px;top:190px;width:167px;height:19px;background:linear-gradient(#7e8577,#848b7d)"></div>
<div class="t w c" style="left:378px;top:193px;width:167px"><span class="m">1508A</span>小会议室</div>
<div class="a" style="left:378px;top:209px;width:167px;height:405px;background:#f2f9e7"></div>
<div class="a" style="left:378px;top:614px;width:167px;height:155px;background:#e8f0dc"></div>
<div class="a" style="left:378px;top:231px;width:167px;height:1px;background:#e2ebd6"></div>
<div class="a" style="left:378px;top:254px;width:167px;height:1px;background:#d6dfc9"></div>
<div class="a" style="left:378px;top:277px;width:167px;height:1px;background:#e2ebd6"></div>
<div class="a" style="left:378px;top:300px;width:167px;height:1px;background:#d6dfc9"></div>
<div class="a" style="left:378px;top:323px;width:167px;height:1px;background:#e2ebd6"></div>
<div class="a" style="left:378px;top:346px;width:167px;height:1px;background:#d6dfc9"></div>
<div class="a" style="left:378px;top:369px;width:167px;height:1px;background:#e2ebd6"></div>
<div class="a" style="left:378px;top:392px;width:167px;height:1px;background:#d6dfc9"></div>
<div class="a" style="left:378px;top:415px;width:167px;height:1px;background:#e2ebd6"></div>
<div class="a" style="left:378px;top:438px;width:167px;height:1px;background:#d6dfc9"></div>
<div class="a" style="left:378px;top:460px;width:167px;height:1px;background:#e2ebd6"></div>
<div class="a" style="left:378px;top:482px;width:167px;height:1px;background:#d6dfc9"></div>
<div class="a" style="left:378px;top:504px;width:167px;height:1px;background:#e2ebd6"></div>
<div class="a" style="left:378px;top:526px;width:167px;height:1px;background:#d6dfc9"></div>
<div class="a" style="left:378px;top:548px;width:167px;height:1px;background:#e2ebd6"></div>
<div class="a" style="left:378px;top:570px;width:167px;height:1px;background:#d6dfc9"></div>
<div class="a" style="left:378px;top:592px;width:167px;height:1px;background:#e2ebd6"></div>
<div class="a" style="left:378px;top:614px;width:167px;height:1px;background:#d0d8c4"></div>
<div class="a" style="left:378px;top:636px;width:167px;height:1px;background:#d8e0cc"></div>
<div class="a" style="left:378px;top:658px;width:167px;height:1px;background:#d0d8c4"></div>
<div class="a" style="left:378px;top:680px;width:167px;height:1px;background:#d8e0cc"></div>
<div class="a" style="left:378px;top:702px;width:167px;height:1px;background:#d0d8c4"></div>
<div class="a" style="left:378px;top:724px;width:167px;height:1px;background:#d8e0cc"></div>
<div class="a" style="left:378px;top:746px;width:167px;height:1px;background:#d0d8c4"></div>
<div class="a" style="left:546px;top:190px;width:167px;height:19px;background:linear-gradient(#788084,#7e868a)"></div>
<div class="t w c" style="left:546px;top:193px;width:167px"><span class="m">1509</span>会议室</div>
<div class="a" style="left:546px;top:209px;width:167px;height:405px;background:#edf5f9"></div>
<div class="a" style="left:546px;top:614px;width:167px;height:155px;background:#e3ebef"></div>
<div class="a" style="left:546px;top:231px;width:167px;height:1px;background:#dbe5ea"></div>
<div class="a" style="left:546px;top:254px;width:167px;height:1px;background:#cfd9de"></div>
<div class="a" style="left:546px;top:277px;width:167px;height:1px;background:#dbe5ea"></div>
<div class="a" style="left:546px;top:300px;width:167px;height:1px;background:#cfd9de"></div>
<div class="a" style="left:546px;top:323px;width:167px;height:1px;background:#dbe5ea"></div>
<div class="a" style="left:546px;top:346px;width:167px;height:1px;background:#cfd9de"></div>
<div class="a" style="left:546px;top:369px;width:167px;height:1px;background:#dbe5ea"></div>
<div class="a" style="left:546px;top:392px;width:167px;height:1px;background:#cfd9de"></div>
<div class="a" style="left:546px;top:415px;width:167px;height:1px;background:#dbe5ea"></div>
<div class="a" style="left:546px;top:438px;width:167px;height:1px;background:#cfd9de"></div>
<div class="a" style="left:546px;top:460px;width:167px;height:1px;background:#dbe5ea"></div>
<div class="a" style="left:546px;top:482px;width:167px;height:1px;background:#cfd9de"></div>
<div class="a" style="left:546px;top:504px;width:167px;height:1px;background:#dbe5ea"></div>
<div class="a" style="left:546px;top:526px;width:167px;height:1px;background:#cfd9de"></div>
<div class="a" style="left:546px;top:548px;width:167px;height:1px;background:#dbe5ea"></div>
<div class="a" style="left:546px;top:570px;width:167px;height:1px;background:#cfd9de"></div>
<div class="a" style="left:546px;top:592px;width:167px;height:1px;background:#dbe5ea"></div>
<div class="a" style="left:546px;top:614px;width:167px;height:1px;background:#c9d2d6"></div>
<div class="a" style="left:546px;top:636px;width:167px;height:1px;background:#d1dade"></div>
<div class="a" style="left:546px;top:658px;width:167px;height:1px;background:#c9d2d6"></div>
<div class="a" style="left:546px;top:680px;width:167px;height:1px;background:#d1dade"></div>
<div class="a" style="left:546px;top:702px;width:167px;height:1px;background:#c9d2d6"></div>
<div class="a" style="left:546px;top:724px;width:167px;height:1px;background:#d1dade"></div>
<div class="a" style="left:546px;top:746px;width:167px;height:1px;background:#c9d2d6"></div>
<div class="a" style="left:160px;top:208px;width:45px;height:1px;background:#989898"></div>
<div class="a" style="left:189px;top:231px;width:16px;height:1px;background:#989898"></div>
<div class="a" style="left:140px;top:209px;width:48px;height:24px;line-height:24px;text-align:right;font-family:'Liberation Serif',serif;font-size:24px;color:#6c7078;letter-spacing:0.5px;white-space:nowrap;overflow:hidden">9</div>
<div class="a" style="left:189px;top:214px;width:14px;height:11px;line-height:11px;font-size:10px;color:#555;letter-spacing:-.3px">00</div>
<div class="a" style="left:160px;top:254px;width:45px;height:1px;background:#989898"></div>
<div class="a" style="left:189px;top:277px;width:16px;height:1px;background:#989898"></div>
<div class="a" style="left:140px;top:255px;width:48px;height:24px;line-height:24px;text-align:right;font-family:'Liberation Serif',serif;font-size:24px;color:#6c7078;letter-spacing:0.5px;white-space:nowrap;overflow:hidden">10</div>
<div class="a" style="left:189px;top:260px;width:14px;height:11px;line-height:11px;font-size:10px;color:#555;letter-spacing:-.3px">00</div>
<div class="a" style="left:160px;top:300px;width:45px;height:1px;background:#989898"></div>
<div class="a" style="left:189px;top:323px;width:16px;height:1px;background:#989898"></div>
<div class="a" style="left:140px;top:301px;width:48px;height:24px;line-height:24px;text-align:right;font-family:'Liberation Serif',serif;font-size:24px;color:#6c7078;letter-spacing:0.5px;white-space:nowrap;overflow:hidden">11</div>
<div class="a" style="left:189px;top:306px;width:14px;height:11px;line-height:11px;font-size:10px;color:#555;letter-spacing:-.3px">00</div>
<div class="a" style="left:160px;top:346px;width:45px;height:1px;background:#989898"></div>
<div class="a" style="left:189px;top:369px;width:16px;height:1px;background:#989898"></div>
<div class="a" style="left:140px;top:347px;width:48px;height:24px;line-height:24px;text-align:right;font-family:'Liberation Serif',serif;font-size:24px;color:#6c7078;letter-spacing:0.5px;white-space:nowrap;overflow:hidden">12</div>
<div class="a" style="left:189px;top:352px;width:14px;height:11px;line-height:11px;font-size:10px;color:#555;letter-spacing:-.3px">00</div>
<div class="a" style="left:160px;top:392px;width:45px;height:1px;background:#989898"></div>
<div class="a" style="left:189px;top:415px;width:16px;height:1px;background:#989898"></div>
<div class="a" style="left:140px;top:393px;width:48px;height:24px;line-height:24px;text-align:right;font-family:'Liberation Serif',serif;font-size:24px;color:#6c7078;letter-spacing:0.5px;white-space:nowrap;overflow:hidden">13</div>
<div class="a" style="left:189px;top:398px;width:14px;height:11px;line-height:11px;font-size:10px;color:#555;letter-spacing:-.3px">00</div>
<div class="a" style="left:160px;top:438px;width:45px;height:1px;background:#989898"></div>
<div class="a" style="left:189px;top:460px;width:16px;height:1px;background:#989898"></div>
<div class="a" style="left:140px;top:439px;width:48px;height:24px;line-height:24px;text-align:right;font-family:'Liberation Serif',serif;font-size:24px;color:#6c7078;letter-spacing:0.5px;white-space:nowrap;overflow:hidden">14</div>
<div class="a" style="left:189px;top:444px;width:14px;height:11px;line-height:11px;font-size:10px;color:#555;letter-spacing:-.3px">00</div>
<div class="a" style="left:160px;top:482px;width:45px;height:1px;background:#989898"></div>
<div class="a" style="left:189px;top:504px;width:16px;height:1px;background:#989898"></div>
<div class="a" style="left:140px;top:483px;width:48px;height:24px;line-height:24px;text-align:right;font-family:'Liberation Serif',serif;font-size:24px;color:#6c7078;letter-spacing:0.5px;white-space:nowrap;overflow:hidden">15</div>
<div class="a" style="left:189px;top:488px;width:14px;height:11px;line-height:11px;font-size:10px;color:#555;letter-spacing:-.3px">00</div>
<div class="a" style="left:160px;top:526px;width:45px;height:1px;background:#989898"></div>
<div class="a" style="left:189px;top:548px;width:16px;height:1px;background:#989898"></div>
<div class="a" style="left:140px;top:527px;width:48px;height:24px;line-height:24px;text-align:right;font-family:'Liberation Serif',serif;font-size:24px;color:#6c7078;letter-spacing:0.5px;white-space:nowrap;overflow:hidden">16</div>
<div class="a" style="left:189px;top:532px;width:14px;height:11px;line-height:11px;font-size:10px;color:#555;letter-spacing:-.3px">00</div>
<div class="a" style="left:160px;top:570px;width:45px;height:1px;background:#989898"></div>
<div class="a" style="left:189px;top:592px;width:16px;height:1px;background:#989898"></div>
<div class="a" style="left:140px;top:571px;width:48px;height:24px;line-height:24px;text-align:right;font-family:'Liberation Serif',serif;font-size:24px;color:#6c7078;letter-spacing:0.5px;white-space:nowrap;overflow:hidden">17</div>
<div class="a" style="left:189px;top:576px;width:14px;height:11px;line-height:11px;font-size:10px;color:#555;letter-spacing:-.3px">00</div>
<div class="a" style="left:160px;top:614px;width:45px;height:1px;background:#989898"></div>
<div class="a" style="left:189px;top:636px;width:16px;height:1px;background:#989898"></div>
<div class="a" style="left:140px;top:615px;width:48px;height:24px;line-height:24px;text-align:right;font-family:'Liberation Serif',serif;font-size:24px;color:#6c7078;letter-spacing:0.5px;white-space:nowrap;overflow:hidden">18</div>
<div class="a" style="left:189px;top:620px;width:14px;height:11px;line-height:11px;font-size:10px;color:#555;letter-spacing:-.3px">00</div>
<div class="a" style="left:160px;top:658px;width:45px;height:1px;background:#989898"></div>
<div class="a" style="left:189px;top:680px;width:16px;height:1px;background:#989898"></div>
<div class="a" style="left:140px;top:659px;width:48px;height:24px;line-height:24px;text-align:right;font-family:'Liberation Serif',serif;font-size:24px;color:#6c7078;letter-spacing:0.5px;white-space:nowrap;overflow:hidden">19</div>
<div class="a" style="left:189px;top:664px;width:14px;height:11px;line-height:11px;font-size:10px;color:#555;letter-spacing:-.3px">00</div>
<div class="a" style="left:160px;top:702px;width:45px;height:1px;background:#989898"></div>
<div class="a" style="left:189px;top:724px;width:16px;height:1px;background:#989898"></div>
<div class="a" style="left:140px;top:703px;width:48px;height:24px;line-height:24px;text-align:right;font-family:'Liberation Serif',serif;font-size:24px;color:#6c7078;letter-spacing:0.5px;white-space:nowrap;overflow:hidden">20</div>
<div class="a" style="left:189px;top:708px;width:14px;height:11px;line-height:11px;font-size:10px;color:#555;letter-spacing:-.3px">00</div>
<div class="a" style="left:160px;top:746px;width:45px;height:1px;background:#989898"></div>
<div class="a" style="left:140px;top:747px;width:48px;height:24px;line-height:24px;text-align:right;font-family:'Liberation Serif',serif;font-size:24px;color:#6c7078;letter-spacing:0.5px;white-space:nowrap;overflow:hidden">21</div>
<div class="a" style="left:189px;top:752px;width:14px;height:11px;line-height:11px;font-size:10px;color:#555;letter-spacing:-.3px">00</div>
<div class="a" style="left:164px;top:251px;width:41px;height:3px;background:linear-gradient(#f6b22a,#e89a0c)"></div>
<!-- APPOINTMENTS -->
<div class="a" style="left:210px;top:505px;width:4px;height:66px;background:#f0f0f0;border:1px solid #cfcfcf;border-right:none"></div>
<div class="a" style="left:210px;top:516px;width:3px;height:44px;background:#fff;border-top:1px solid #cfcfcf;border-bottom:1px solid #cfcfcf"></div>
<div class="a" style="left:213px;top:505px;width:162px;height:66px;border:1px solid #c6c6c6;background:linear-gradient(#ffffff 35%,#e6e6e6)"></div>
<svg class="a" style="left:219px;top:509px" width="15" height="13" viewBox="0 0 15 13"><use href="#recur"/></svg>
<div class="t m" style="left:236px;top:508px">15:45-16:45</div>
<div class="t" style="left:236px;top:519px">开发一部部门周会</div>
<div class="a" style="left:209px;top:571px;width:166px;height:44px;border:2px solid #0a0a0a;background:linear-gradient(#ffffff 35%,#ebebeb)"></div>
<div class="a" style="left:211px;top:573px;width:3px;height:40px;background:#fff;border-right:1px solid #d0d0d0"></div>
<svg class="a" style="left:219px;top:575px" width="15" height="13" viewBox="0 0 15 13"><use href="#recur"/></svg>
<div class="t m" style="left:236px;top:574px">17:00-18:00</div>
<div class="t" style="left:236px;top:585px"><span class="m">Coevery</span>周会</div>
<div class="a" style="left:378px;top:505px;width:4px;height:44px;background:#fff;border:1px solid #cfcfcf;border-right:none"></div>
<div class="a" style="left:381px;top:505px;width:162px;height:44px;border:1px solid #c6c6c6;background:linear-gradient(#ffffff 35%,#e6e6e6)"></div>
<svg class="a" style="left:387px;top:509px" width="15" height="13" viewBox="0 0 15 13"><use href="#recur"/></svg>
<div class="t" style="left:404px;top:507px"><span class="m">15:30-16:30 </span>销售周会</div>
<div class="a" style="left:404px;top:522px;width:134px;height:1px;background:#cfcfcf"></div>
<div class="t" style="left:404px;top:524px">每周例行会议</div>
<div class="a" style="left:546px;top:398px;width:23px;height:182px;border-radius:0 6px 6px 0;background:linear-gradient(90deg,#d9e0e3,#cdd4d7);border:1px solid #c2c9cc;border-left:none"></div>
<svg class="a" style="left:552px;top:414px" width="9" height="10" viewBox="0 0 9 10"><path d="M1 .5v9M8 1L3 5l5 4" fill="none" stroke="#b4bbbe" stroke-width="1.300"/></svg>
<div class="t m" style="left:496px;top:491px;width:120px;height:14px;text-align:center;color:#6e6e6e;transform:rotate(-90deg);font-size:11px;letter-spacing:-0.6px">Previous Appointment</div>
<div class="a" style="left:689px;top:398px;width:24px;height:182px;border-radius:6px 0 0 6px;background:linear-gradient(90deg,#d9e0e3,#cdd4d7);border:1px solid #c2c9cc;border-right:none"></div>
<svg class="a" style="left:697px;top:414px" width="9" height="10" viewBox="0 0 9 10"><path d="M8 .5v9M1 1l5 4l-5 4" fill="none" stroke="#b4bbbe" stroke-width="1.300"/></svg>
<div class="t m" style="left:640px;top:491px;width:120px;height:14px;text-align:center;color:#6e6e6e;transform:rotate(-90deg);font-size:11px;letter-spacing:-0.6px">Next Appointment</div>
<div class="a" style="left:713px;top:171px;width:17px;height:598px;background:linear-gradient(90deg,#bdbdbd,#d2d2d2 60%,#c6c6c6)"></div>
<svg class="a" style="left:717px;top:177px" width="9" height="5" viewBox="0 0 9 5"><path d="M0 5L4.500 0L9 5z" fill="#5a5a5a"/></svg>
<svg class="a" style="left:717px;top:758px" width="9" height="5" viewBox="0 0 9 5"><path d="M0 0L4.500 5L9 0z" fill="#5a5a5a"/></svg>
<div class="a" style="left:714px;top:400px;width:15px;height:292px;border:1px solid #7e7e7e;border-radius:2px;background:linear-gradient(90deg,#e4e4e4,#c9c9c9 50%,#b4b4b4)"></div>
<div class="a" style="left:718px;top:542px;width:7px;height:7px;background:repeating-linear-gradient(90deg,#5e5e5e 0 1px,transparent 1px 2px)"></div>
<div class="a" style="left:156px;top:769px;width:418px;height:17px;background:linear-gradient(#c9c9c9,#bcbcbc)"></div>
<div class="a" style="left:574px;top:769px;width:139px;height:17px;background:linear-gradient(#a6a6a6,#9a9a9a)"></div>
<div class="a" style="left:713px;top:769px;width:17px;height:17px;background:#7e7e7e"></div>
<svg class="a" style="left:162px;top:773px" width="5" height="9" viewBox="0 0 5 9"><path d="M5 0L0 4.500L5 9z" fill="#4a4a4a"/></svg>
<svg class="a" style="left:563px;top:773px" width="5" height="9" viewBox="0 0 5 9"><path d="M0 0L5 4.500L0 9z" fill="#4a4a4a"/></svg>
<div class="a" style="left:173px;top:770px;width:384px;height:15px;border:1px solid #7e7e7e;border-radius:2px;background:linear-gradient(#e6e6e6,#cccccc 50%,#b8b8b8)"></div>
<div class="a" style="left:361px;top:774px;width:7px;height:7px;background:repeating-linear-gradient(90deg,#5e5e5e 0 1px,transparent 1px 2px)"></div>
<svg class="a" style="left:577px;top:773px" width="10" height="9" viewBox="0 0 10 9"><path d="M0.7 0v9" stroke="#7c7c7c" stroke-width="1.400"/><path d="M6 0L2 4.500L6 9zM10 0L6 4.500L10 9z" fill="#7c7c7c"/></svg>
<svg class="a" style="left:595px;top:773px" width="10" height="9" viewBox="0 0 10 9"><path d="M5 0L1 4.500L5 9zM9.500 0L5.500 4.500L9.500 9z" fill="#7c7c7c"/></svg>
<svg class="a" style="left:613px;top:773px" width="10" height="9" viewBox="0 0 10 9"><path d="M7 0L3 4.500L7 9z" fill="#7c7c7c"/></svg>
<svg class="a" style="left:631px;top:773px" width="10" height="9" viewBox="0 0 10 9"><path d="M3 0L7 4.500L3 9z" fill="#7c7c7c"/></svg>
<svg class="a" style="left:647px;top:773px" width="10" height="9" viewBox="0 0 10 9"><path d="M0.5 0L4.500 4.500L0.5 9zM5 0L9 4.500L5 9z" fill="#7c7c7c"/></svg>
<svg class="a" style="left:664px;top:773px" width="10" height="9" viewBox="0 0 10 9"><path d="M0 0L4 4.500L0 9zM4 0L8 4.500L4 9z" fill="#7c7c7c"/><path d="M9.300 0v9" stroke="#7c7c7c" stroke-width="1.400"/></svg>
<svg class="a" style="left:681px;top:773px" width="10" height="9" viewBox="0 0 10 9"><path d="M5 0.500v8M1 4.500h8" stroke="#7c7c7c" stroke-width="1.800"/></svg>
<svg class="a" style="left:698px;top:773px" width="10" height="9" viewBox="0 0 10 9"><path d="M0.500 4.500h9" stroke="#3e3e3e" stroke-width="2"/></svg>
<div class="a" style="left:732px;top:169px;width:5px;height:618px;background:#8a8a8a"></div>
<div class="a" style="left:733px;top:470px;width:2px;height:16px;background:repeating-linear-gradient(#5a5a5a 0 2px,transparent 2px 4px)"></div>
<!-- DATE NAVIGATOR -->
<div class="a" style="left:737px;top:169px;width:231px;height:618px;background:#555"></div>
<div class="a" style="left:738px;top:170px;width:228px;height:616px;background:#fff"></div>
<style>
.dn{position:absolute;width:23px;height:21px;line-height:21px;text-align:right;padding-right:2px;font-size:14px;color:#3a3a3a;white-space:nowrap;letter-spacing:-.2px}
.dn.b{font-weight:bold;color:#262626}
.dn.r{color:#c41a1a}
.dn.g{color:#c4c4c4}
.wk{position:absolute;width:16px;height:21px;line-height:20px;font-size:11px;color:#2a2a2a;text-align:right;letter-spacing:-.3px}
.wd{position:absolute;width:23px;height:16px;line-height:16px;text-align:center;font-size:14px;color:#3a3a3a}
.mt{position:absolute;height:18px;line-height:18px;font-size:14px;color:#3a3a3a;white-space:nowrap}
</style>
<div class="mt" style="left:771px;top:176px">九月</div>
<div class="mt" style="left:906px;top:176px;letter-spacing:-.1px">2013</div>
<div class="wd" style="left:782px;top:202px">日</div>
<div class="wd" style="left:805px;top:202px">一</div>
<div class="wd" style="left:828px;top:202px">二</div>
<div class="wd" style="left:851px;top:202px">三</div>
<div class="wd" style="left:874px;top:202px">四</div>
<div class="wd" style="left:897px;top:202px">五</div>
<div class="wd" style="left:920px;top:202px">六</div>
<div class="a" style="left:778px;top:221px;width:162px;height:1px;background:#8a8a8a"></div>
<div class="a" style="left:778px;top:221px;width:1px;height:131px;background:#8a8a8a"></div>
<div class="wk" style="left:760px;top:223px">35</div>
<div class="dn g" style="left:780px;top:225px">25</div>
<div class="dn g" style="left:803px;top:225px">26</div>
<div class="dn g" style="left:826px;top:225px">27</div>
<div class="dn g" style="left:849px;top:225px">28</div>
<div class="dn g" style="left:872px;top:225px">29</div>
<div class="dn g" style="left:895px;top:225px">30</div>
<div class="dn g" style="left:918px;top:225px">31</div>
<div class="wk" style="left:760px;top:244px">36</div>
<div class="dn r" style="left:780px;top:246px">1</div>
<div class="dn " style="left:803px;top:246px">2</div>
<div class="dn b" style="left:826px;top:246px">3</div>
<div class="dn b" style="left:849px;top:246px">4</div>
<div class="dn " style="left:872px;top:246px">5</div>
<div class="dn b" style="left:895px;top:246px">6</div>
<div class="dn r" style="left:918px;top:246px">7</div>
<div class="wk" style="left:760px;top:265px">37</div>
<div class="dn r" style="left:780px;top:267px">8</div>
<div class="dn " style="left:803px;top:267px">9</div>
<div class="dn b" style="left:826px;top:267px">10</div>
<div class="dn b" style="left:849px;top:267px">11</div>
<div class="dn " style="left:872px;top:267px">12</div>
<div class="dn b" style="left:895px;top:267px;background:#fbe3a4;outline:1px solid #e9c978;outline-offset:-1px">13</div>
<div class="dn r" style="left:918px;top:267px">14</div>
<div class="wk" style="left:760px;top:286px">38</div>
<div class="dn r" style="left:780px;top:288px">15</div>
<div class="dn " style="left:803px;top:288px;background:#6c6c6c;color:#fff">16</div>
<div class="dn b" style="left:826px;top:288px">17</div>
<div class="dn b" style="left:849px;top:288px">18</div>
<div class="dn b" style="left:872px;top:288px">19</div>
<div class="dn b" style="left:895px;top:288px">20</div>
<div class="dn r" style="left:918px;top:288px">21</div>
<div class="wk" style="left:760px;top:307px">39</div>
<div class="dn r" style="left:780px;top:309px">22</div>
<div class="dn " style="left:803px;top:309px">23</div>
<div class="dn b" style="left:826px;top:309px">24</div>
<div class="dn b" style="left:849px;top:309px">25</div>
<div class="dn b" style="left:872px;top:309px">26</div>
<div class="dn b" style="left:895px;top:309px">27</div>
<div class="dn r" style="left:918px;top:309px">28</div>
<div class="wk" style="left:760px;top:328px">40</div>
<div class="dn r" style="left:780px;top:330px">29</div>
<div class="dn " style="left:803px;top:330px">30</div>
<div class="mt" style="left:771px;top:358px">十月</div>
<div class="mt" style="left:906px;top:358px;letter-spacing:-.1px">2013</div>
<div class="wd" style="left:782px;top:384px">日</div>
<div class="wd" style="left:805px;top:384px">一</div>
<div class="wd" style="left:828px;top:384px">二</div>
<div class="wd" style="left:851px;top:384px">三</div>
<div class="wd" style="left:874px;top:384px">四</div>
<div class="wd" style="left:897px;top:384px">五</div>
<div class="wd" style="left:920px;top:384px">六</div>
<div class="a" style="left:778px;top:403px;width:162px;height:1px;background:#8a8a8a"></div>
<div class="a" style="left:778px;top:403px;width:1px;height:131px;background:#8a8a8a"></div>
<div class="wk" style="left:760px;top:405px">40</div>
<div class="dn b" style="left:826px;top:407px">1</div>
<div class="dn b" style="left:849px;top:407px">2</div>
<div class="dn " style="left:872px;top:407px">3</div>
<div class="dn b" style="left:895px;top:407px">4</div>
<div class="dn r" style="left:918px;top:407px">5</div>
<div class="wk" style="left:760px;top:426px">41</div>
<div class="dn r" style="left:780px;top:428px">6</div>
<div class="dn " style="left:803px;top:428px">7</div>
<div class="dn b" style="left:826px;top:428px">8</div>
<div class="dn b" style="left:849px;top:428px">9</div>
<div class="dn b" style="left:872px;top:428px">10</div>
<div class="dn b" style="left:895px;top:428px">11</div>
<div class="dn r" style="left:918px;top:428px">12</div>
<div class="wk" style="left:760px;top:447px">42</div>
<div class="dn r" style="left:780px;top:449px">13</div>
<div class="dn " style="left:803px;top:449px">14</div>
<div class="dn b" style="left:826px;top:449px">15</div>
<div class="dn b" style="left:849px;top:449px">16</div>
<div class="dn " style="left:872px;top:449px">17</div>
<div class="dn b" style="left:895px;top:449px">18</div>
<div class="dn r" style="left:918px;top:449px">19</div>
<div class="wk" style="left:760px;top:468px">43</div>
<div class="dn r" style="left:780px;top:470px">20</div>
<div class="dn " style="left:803px;top:470px">21</div>
<div class="dn b" style="left:826px;top:470px">22</div>
<div class="dn b" style="left:849px;top:470px">23</div>
<div class="dn " style="left:872px;top:470px">24</div>
<div class="dn b" style="left:895px;top:470px">25</div>
<div class="dn r" style="left:918px;top:470px">26</div>
<div class="wk" style="left:760px;top:489px">44</div>
<div class="dn r" style="left:780px;top:491px">27</div>
<div class="dn " style="left:803px;top:491px">28</div>
<div class="dn b" style="left:826px;top:491px">29</div>
<div class="dn b" style="left:849px;top:491px">30</div>
<div class="dn b" style="left:872px;top:491px">31</div>
<div class="wk" style="left:760px;top:510px">45</div>
<div class="mt" style="left:765px;top:540px">十一月</div>
<div class="mt" style="left:906px;top:540px;letter-spacing:-.1px">2013</div>
<div class="wd" style="left:782px;top:566px">日</div>
<div class="wd" style="left:805px;top:566px">一</div>
<div class="wd" style="left:828px;top:566px">二</div>
<div class="wd" style="left:851px;top:566px">三</div>
<div class="wd" style="left:874px;top:566px">四</div>
<div class="wd" style="left:897px;top:566px">五</div>
<div class="wd" style="left:920px;top:566px">六</div>
<div class="a" style="left:778px;top:585px;width:162px;height:1px;background:#8a8a8a"></div>
<div class="a" style="left:778px;top:585px;width:1px;height:131px;background:#8a8a8a"></div>
<div class="wk" style="left:760px;top:587px">44</div>
<div class="dn b" style="left:895px;top:589px">1</div>
<div class="dn r" style="left:918px;top:589px">2</div>
<div class="wk" style="left:760px;top:608px">45</div>
<div class="dn r" style="left:780px;top:610px">3</div>
<div class="dn " style="left:803px;top:610px">4</div>
<div class="dn b" style="left:826px;top:610px">5</div>
<div class="dn b" style="left:849px;top:610px">6</div>
<div class="dn " style="left:872px;top:610px">7</div>
<div class="dn b" style="left:895px;top:610px">8</div>
<div class="dn r" style="left:918px;top:610px">9</div>
<div class="wk" style="left:760px;top:629px">46</div>
<div class="dn r" style="left:780px;top:631px">10</div>
<div class="dn " style="left:803px;top:631px">11</div>
<div class="dn b" style="left:826px;top:631px">12</div>
<div class="dn b" style="left:849px;top:631px">13</div>
<div class="dn " style="left:872px;top:631px">14</div>
<div class="dn b" style="left:895px;top:631px">15</div>
<div class="dn r" style="left:918px;top:631px">16</div>
<div class="wk" style="left:760px;top:650px">47</div>
<div class="dn r" style="left:780px;top:652px">17</div>
<div class="dn " style="left:803px;top:652px">18</div>
<div class="dn b" style="left:826px;top:652px">19</div>
<div class="dn b" style="left:849px;top:652px">20</div>
<div class="dn b" style="left:872px;top:652px">21</div>
<div class="dn b" style="left:895px;top:652px">22</div>
<div class="dn r" style="left:918px;top:652px">23</div>
<div class="wk" style="left:760px;top:671px">48</div>
<div class="dn r" style="left:780px;top:673px">24</div>
<div class="dn " style="left:803px;top:673px">25</div>
<div class="dn b" style="left:826px;top:673px">26</div>
<div class="dn b" style="left:849px;top:673px">27</div>
<div class="dn b" style="left:872px;top:673px">28</div>
<div class="dn b" style="left:895px;top:673px">29</div>
<div class="dn r" style="left:918px;top:673px">30</div>
<div class="wk" style="left:760px;top:692px">49</div>
<div class="dn g" style="left:780px;top:694px">1</div>
<div class="dn g" style="left:803px;top:694px">2</div>
<div class="dn g" style="left:826px;top:694px">3</div>
<div class="dn g" style="left:849px;top:694px">4</div>
<div class="dn g" style="left:872px;top:694px">5</div>
<div class="dn g" style="left:895px;top:694px">6</div>
<div class="dn g" style="left:918px;top:694px">7</div>
<svg class="a" style="left:751px;top:181px" width="5" height="8" viewBox="0 0 5 8"><path d="M5 0L0 4L5 8z" fill="#4a4a4a"/></svg>
<svg class="a" style="left:812px;top:181px" width="5" height="8" viewBox="0 0 5 8"><path d="M0 0L5 4L0 8z" fill="#4a4a4a"/></svg>
<svg class="a" style="left:892px;top:181px" width="5" height="8" viewBox="0 0 5 8"><path d="M5 0L0 4L5 8z" fill="#4a4a4a"/></svg>
<svg class="a" style="left:946px;top:181px" width="5" height="8" viewBox="0 0 5 8"><path d="M0 0L5 4L0 8z" fill="#4a4a4a"/></svg>
<!-- STATUS BAR -->
<div class="a" style="left:154px;top:786px;width:814px;height:27px;background:linear-gradient(#2e2e2e 0,#4c4c4c 2px,#424242 40%,#333 100%)"></div>
<div class="a" style="left:148px;top:812px;width:822px;height:3px;background:#858585"></div>
<div class="a" style="left:968px;top:139px;width:2px;height:676px;background:#868686"></div>
</body>
</html>
